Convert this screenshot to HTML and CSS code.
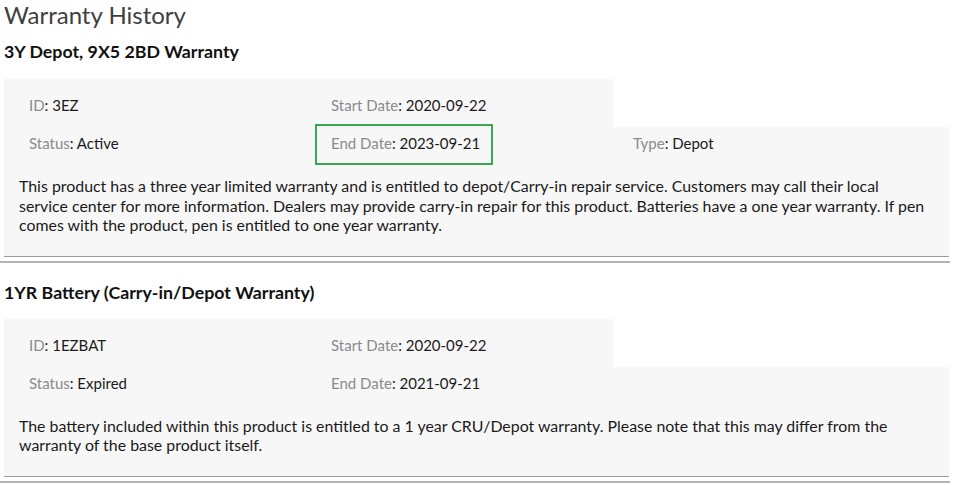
FILE: index.html
```html
<!DOCTYPE html>
<html>
<head>
<meta charset="utf-8">
<link rel="stylesheet" href="styles.css">
</head>
<body>
<div class="page">
  <h1 class="title">Warranty History</h1>

  <section class="warranty">
    <h2 class="w-name">3Y Depot, 9X5 2BD Warranty</h2>
    <div class="panel">
      <div class="row row-short">
        <div class="field"><span class="lbl">ID</span>: 3EZ</div>
        <div class="field"><span class="lbl">Start Date</span>: 2020-09-22</div>
      </div>
      <div class="row row-full">
        <div class="field"><span class="lbl">Status</span>: Active</div>
        <div class="field highlight"><span class="lbl">End Date</span>: 2023-09-21</div>
        <div class="field"><span class="lbl">Type</span>: Depot</div>
      </div>
      <p class="desc">This product has a three year limited warranty and is entitled to depot/Carry-in repair service. Customers may call their local service center for more information. Dealers may provide carry-in repair for this product. Batteries have a one year warranty. If pen comes with the product, pen is entitled to one year warranty.</p>
    </div>
  </section>
  <hr class="sep">

  <section class="warranty">
    <h2 class="w-name">1YR Battery (Carry-in/Depot Warranty)</h2>
    <div class="panel">
      <div class="row row-short">
        <div class="field"><span class="lbl">ID</span>: 1EZBAT</div>
        <div class="field"><span class="lbl">Start Date</span>: 2020-09-22</div>
      </div>
      <div class="row row-full">
        <div class="field"><span class="lbl">Status</span>: Expired</div>
        <div class="field"><span class="lbl">End Date</span>: 2021-09-21</div>
      </div>
      <p class="desc">The battery included within this product is entitled to a 1 year CRU/Depot warranty. Please note that this may differ from the warranty of the base product itself.</p>
    </div>
  </section>
  <hr class="sep">
</div>
</body>
</html>
```

FILE: styles.css
```css
html, body {
  margin: 0;
  padding: 0;
  background: #ffffff;
}
body {
  font-family: Lato, "Open Sans", sans-serif;
  color: #1a1a1a;
}
.page {
  width: 951px;
}
.title {
  margin: 0 0 6px 4px;
  height: 30px;
  font-size: 24px;
  line-height: 30px;
  font-weight: 400;
  color: #404040;
}
.w-name {
  margin: 0 0 0 4px;
  height: 43px;
  padding-top: 4px;
  font-size: 17.8px;
  line-height: 22px;
  font-weight: 700;
  color: #111;
  box-sizing: border-box;
}
.sep + .warranty .w-name {
  height: 56px;
  padding-top: 18px;
}
.panel {
  margin-left: 4px;
  width: 945px;
  border-bottom: 1px solid #9a9a9a;
}
.row {
  display: flex;
  align-items: center;
  background: #f7f7f7;
  padding-left: 25px;
  font-size: 15px;
  line-height: 20px;
}
.row-short {
  width: 609px;
  height: 48px;
  padding-top: 4px;
  box-sizing: border-box;
}
.row-full {
  height: 32px;
}
.field {
  width: 302px;
  flex: none;
  color: #1a1a1a;
}
.lbl {
  color: #8a8a8a;
}
.highlight {
  position: relative;
}
.highlight::before {
  content: "";
  position: absolute;
  left: -16px;
  top: -9px;
  width: 178px;
  height: 41px;
  box-sizing: border-box;
  border: 2px solid #3aa84e;
}
.desc {
  margin: 0;
  background: #f7f7f7;
  padding: 17px 20px 21px 15px;
  font-size: 15.9px;
  line-height: 19.5px;
  color: #1a1a1a;
}
.sep {
  margin: 4px 0 0 0;
  width: 950px;
  height: 0;
  border: 0;
  border-top: 2px solid #b4b4b4;
}
```
